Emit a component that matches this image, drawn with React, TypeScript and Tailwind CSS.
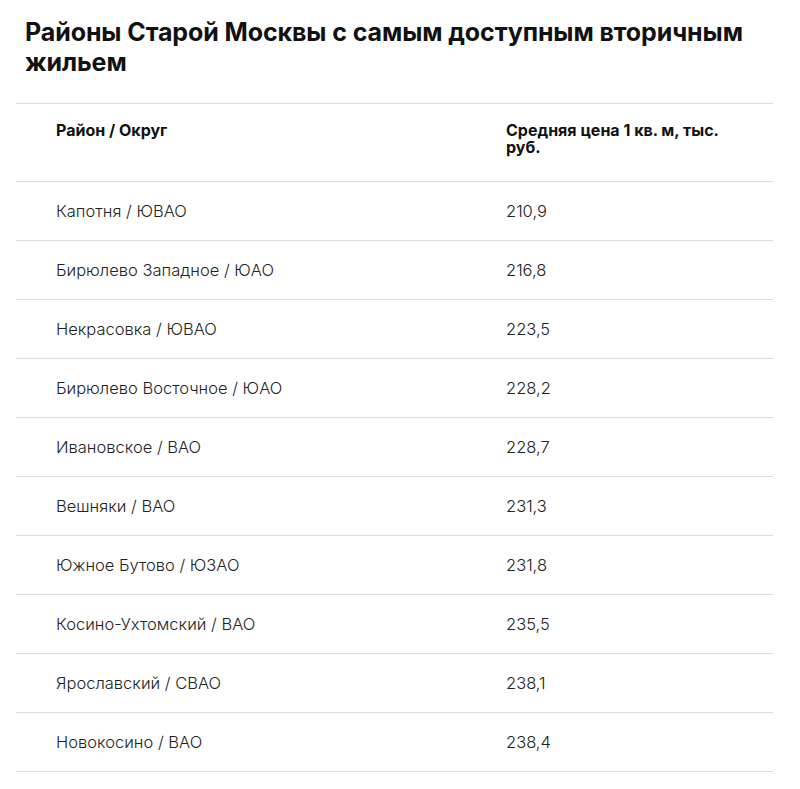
const rows = [
  { name: "Капотня / ЮВАО", price: "210,9" },
  { name: "Бирюлево Западное / ЮАО", price: "216,8" },
  { name: "Некрасовка / ЮВАО", price: "223,5" },
  { name: "Бирюлево Восточное / ЮАО", price: "228,2" },
  { name: "Ивановское / ВАО", price: "228,7" },
  { name: "Вешняки / ВАО", price: "231,3" },
  { name: "Южное Бутово / ЮЗАО", price: "231,8" },
  { name: "Косино-Ухтомский / ВАО", price: "235,5" },
  { name: "Ярославский / СВАО", price: "238,1" },
  { name: "Новокосино / ВАО", price: "238,4" },
];

export default function App() {
  return (
    <div className="w-[800px] h-[789px] bg-white font-['Inter',sans-serif] text-[#1a1a1a]">
      <h1 className="px-[25px] pt-[17px] text-[25px] leading-[30px] font-bold tracking-[-0.1px] text-[#111]">
        Районы Старой Москвы с самым доступным вторичным жильем
      </h1>

      <div className="ml-4 w-[757px] mt-[26px] border-t border-[#dcdcdc]">
        <div className="grid grid-cols-[450px_1fr] h-[78px] border-b border-[#dcdcdc]">
          <div className="pl-10 pt-[18px] text-[16px] leading-[17px] font-bold text-[#111]">Район / Округ</div>
          <div className="pl-10 pt-[18px] pr-10 text-[16px] leading-[17px] font-bold text-[#111]">
            Средняя цена 1 кв. м, тыс. руб.
          </div>
        </div>
        {rows.map((row) => (
          <div
            key={row.name}
            className="grid grid-cols-[450px_1fr] h-[59px] items-center border-b border-[#dcdcdc] text-[16.5px] font-light text-[#222]"
          >
            <div className="pl-10">{row.name}</div>
            <div className="pl-10">{row.price}</div>
          </div>
        ))}
      </div>
    </div>
  );
}
